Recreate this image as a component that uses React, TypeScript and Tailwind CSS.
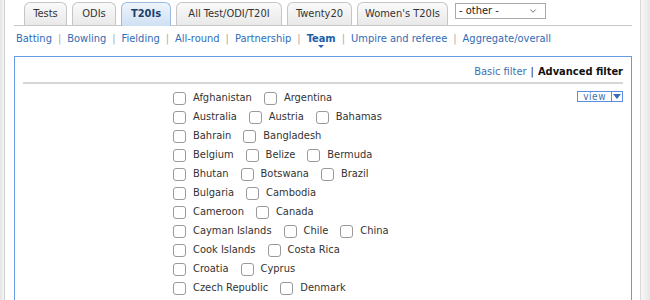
import { ChevronDown } from "lucide-react";

const font = "font-['Tahoma','DejaVu_Sans_Condensed',sans-serif]";

const tabs = [
  { label: "Tests", w: "w-[43px]" },
  { label: "ODIs", w: "w-[44px]" },
  { label: "T20Is", w: "w-[50px]", active: true },
  { label: "All Test/ODI/T20I", w: "w-[106px]" },
  { label: "Twenty20", w: "w-[65px]" },
  { label: "Women's T20Is", w: "w-[91px]" },
];

const links = [
  "Batting",
  "Bowling",
  "Fielding",
  "All-round",
  "Partnership",
  "Team",
  "Umpire and referee",
  "Aggregate/overall",
];

const rows = [
  ["Afghanistan", "Argentina"],
  ["Australia", "Austria", "Bahamas"],
  ["Bahrain", "Bangladesh"],
  ["Belgium", "Belize", "Bermuda"],
  ["Bhutan", "Botswana", "Brazil"],
  ["Bulgaria", "Cambodia"],
  ["Cameroon", "Canada"],
  ["Cayman Islands", "Chile", "China"],
  ["Cook Islands", "Costa Rica"],
  ["Croatia", "Cyprus"],
  ["Czech Republic", "Denmark"],
];

export default function App() {
  return (
    <div className={`w-[650px] h-[300px] flex overflow-hidden bg-white ${font}`}>
      {/* left page edge */}
      <div className="w-[5px] shrink-0 bg-gradient-to-r from-[#e4e4e4] to-[#f6f6f6] border-r border-[#cfcfcf]" />

      <div className="flex-1 flex flex-col pl-[9px] pr-[8px]">
        {/* Tabs */}
        <div className="flex items-end h-[26px] border-b border-[#c8c8c8] pl-[10px] gap-[5px]">
          {tabs.map((t) =>
            t.active ? (
              <div
                key={t.label}
                className={`${t.w} h-[24px] -mb-px flex items-center justify-center rounded-t-[6px] border border-b-0 border-[#9dbbe0] bg-gradient-to-b from-[#eef4fb] to-[#cfe0f4] text-[11px] font-bold text-[#1d3f6e]`}
              >
                {t.label}
              </div>
            ) : (
              <div
                key={t.label}
                className={`${t.w} h-[23px] flex items-center justify-center rounded-t-[6px] border border-b-0 border-[#c6c6c6] bg-gradient-to-b from-[#fafafa] to-[#e9e9e9] text-[11px] text-[#333]`}
              >
                {t.label}
              </div>
            )
          )}
          <div className="self-start mt-[3px] ml-[2px] w-[91px] h-[16px] flex items-center justify-between border border-[#a9a9a9] bg-white pl-[3px] pr-[7px] text-[11px] text-[#222]">
            <span>- other -</span>
            <ChevronDown size={10} strokeWidth={2} className="text-[#555]" />
          </div>
        </div>

        {/* Sub navigation */}
        <div className="flex items-center h-[27px] pl-[2px] text-[11px]">
          {links.map((l, i) => (
            <div key={l} className="flex items-center">
              {i > 0 && <span className="px-[6px] text-[#aaa]">|</span>}
              {l === "Team" ? (
                <span className="relative font-bold text-[#1d5fa8]">
                  {l}
                  <span className="absolute left-1/2 -translate-x-1/2 top-[14px] w-0 h-0 border-l-[3px] border-r-[3px] border-t-[3px] border-l-transparent border-r-transparent border-t-[#2b64a8]" />
                </span>
              ) : (
                <span className="text-[#2f6cb5]">{l}</span>
              )}
            </div>
          ))}
        </div>

        {/* Filter box */}
        <div className="mt-[3px] flex-1 border border-[#6a9be2] border-b-0 px-[8px]">
          <div className="h-[25px] flex items-end justify-end pb-[2px] text-[11px]">
            <span className="text-[#3d6fb0]">Basic filter</span>
            <span className="px-[4px] text-[#222]">|</span>
            <span className="font-bold text-[#111]">Advanced filter</span>
          </div>
          <div className="h-[2px] bg-[#d6d6d6]" />

          <div className="flex pt-[5px]">
            <div className="w-[150px] shrink-0" />
            <div className="flex-1 flex flex-col">
              {rows.map((r) => (
                <div key={r[0]} className="h-[19px] flex items-center gap-[12px]">
                  {r.map((c) => (
                    <label key={c} className="flex items-center gap-[7px] text-[11px] text-[#333]">
                      <span className="w-[13px] h-[13px] rounded-[3px] border border-[#9a9a9a] bg-white" />
                      {c}
                    </label>
                  ))}
                </div>
              ))}
            </div>
            <div className="self-start mt-[2px] flex items-stretch h-[11px] border border-[#5b8ee0] text-[10px] leading-none">
              <span className="px-[5px] flex items-center text-[#3a6fb8] tracking-[0.5px]">view</span>
              <span className="w-[11px] flex items-center justify-center border-l border-[#5b8ee0] bg-white">
                <span className="w-0 h-0 border-l-[4px] border-r-[4px] border-t-[5px] border-l-transparent border-r-transparent border-t-[#3a6fb8]" />
              </span>
            </div>
          </div>
        </div>
      </div>

      {/* right page edge */}
      <div className="w-[10px] shrink-0 border-l border-[#d9d9d9] bg-gradient-to-r from-[#f7f7f7] to-[#e6e6e6]" />
    </div>
  );
}
